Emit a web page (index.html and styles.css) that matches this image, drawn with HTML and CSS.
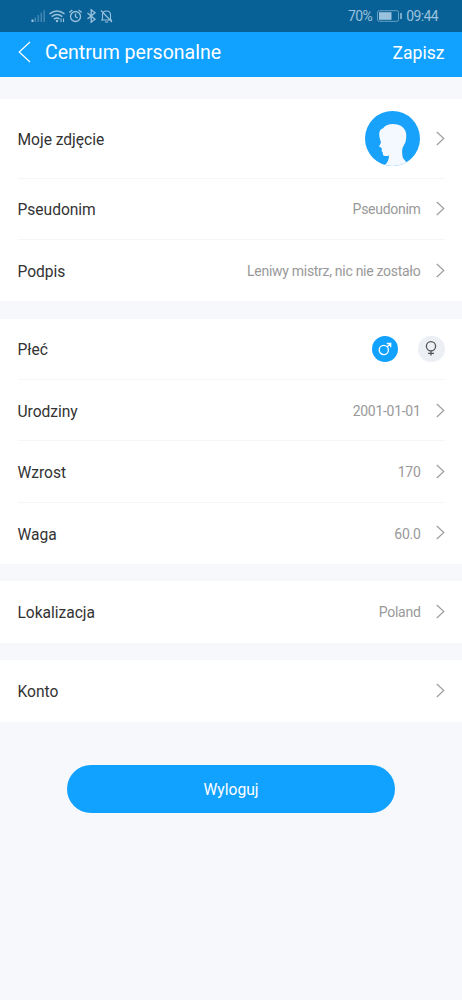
FILE: index.html
```html
<!DOCTYPE html>
<html lang="pl">
<head>
<meta charset="utf-8">
<title>Centrum personalne</title>
<link rel="stylesheet" href="styles.css">
</head>
<body>
<svg class="defs" width="0" height="0"><symbol id="chev" viewBox="0 0 9 15"><path d="M.8 1 7.8 7.5.8 14" fill="none" stroke="currentColor" stroke-width="1.1"/></symbol></svg>
<div class="status">
  <svg class="status-icons" width="84" height="16" viewBox="0 0 84 16" fill="none" stroke="currentColor" stroke-width="1.3">
    <path d="M2.500 11.500V14" stroke-width="2"/>
    <path d="M5.300 9.500V14M8.300 7V14M11.300 4.500V14M14.200 2.200V14" stroke-width="1.500" opacity=".4"/>
    <path d="M19.500 5.800Q27 .3 34.500 5.800M21.700 8.600Q27 4.600 32.300 8.600M24 11.200Q27 9 29.500 11" stroke-width="1.500"/>
    <circle cx="27" cy="13" r="1.200" fill="currentColor" stroke="none"/>
    <path d="M31 10.500v3.500M33.500 10.500v3.500" stroke-width="1.100"/>
    <circle cx="45.500" cy="8.500" r="5"/><path d="M45.500 5.500v3.200l2.200 1.300M39.300 4.500l3-2.500M51.700 4.500l-3-2.500"/>
    <path d="M57.500 5 65 11.200 61.200 14.200V1.800L65 4.800 57.500 11"/>
    <path d="M72.500 11.700V7q0-4 4-4 4 0 4 4v4.700M71 12h11M75 14h3.200M71 2.500 82 14" stroke-width="1.100"/>
  </svg>
  <div class="status-right"><span>70%</span>
    <svg width="25" height="12" viewBox="0 0 25 12"><rect x=".5" y=".7" width="21" height="10.600" rx="1.800" fill="none" stroke="currentColor" opacity=".65"/><rect x="2" y="2.200" width="12.500" height="7.600" fill="currentColor"/><path d="M24 3v6" stroke="currentColor" stroke-width="1.500"/></svg>
    <span>09:44</span></div>
</div>
<header class="bar">
  <svg width="13" height="22" viewBox="0 0 13 22"><path d="M12 1 1.200 11 12 21" fill="none" stroke="currentColor" stroke-width="1.200"/></svg>
  <h1>Centrum personalne</h1>
  <span class="save">Zapisz</span>
</header>
<main>
  <section class="group">
    <div class="row photo"><span class="label">Moje zdjęcie</span>
      <svg class="avatar" width="55" height="55" viewBox="0 0 55 55"><defs><clipPath id="round"><circle cx="27.500" cy="27.500" r="27.500"/></clipPath></defs><circle cx="27.500" cy="27.500" r="27.500" fill="#18a2fb"/><path clip-path="url(#round)" fill="#f3f9fe" d="M18 57 20 54Q24 50 24 44.500Q21 45.500 18.500 44.500 17.500 43.500 17.800 41.500L16.500 40 17 38.200 16 36.500 14 35.500 16 31.500Q13.500 25 14.500 21 15.500 17.500 18 17.500 20 13.500 27 13Q37 12.500 40.500 20 42 25 40.500 31L37.500 37Q36.500 42 38 47L43.500 54 45 57Z"/></svg>
      <svg class="chev"><use href="#chev"/></svg></div>
    <div class="row"><span class="label">Pseudonim</span><span class="value">Pseudonim</span><svg class="chev"><use href="#chev"/></svg></div>
    <div class="row"><span class="label">Podpis</span><span class="value">Leniwy mistrz, nic nie zostało</span><svg class="chev"><use href="#chev"/></svg></div>
  </section>
  <section class="group">
    <div class="row"><span class="label">Płeć</span>
      <span class="sex male"><svg width="14" height="14" viewBox="0 0 14 14" fill="none" stroke="currentColor" stroke-width="1.300"><circle cx="5.800" cy="8" r="4.600"/><path d="M9 5 12.500 1.700M8.800 1.500H12.700V5.200"/></svg></span>
      <span class="sex female"><svg width="12" height="15" viewBox="0 0 12 15" fill="none" stroke="currentColor" stroke-width="1.300"><circle cx="6" cy="5.300" r="4.600"/><path d="M6 9.800V14.500M3 12.300H9"/></svg></span></div>
    <div class="row"><span class="label">Urodziny</span><span class="value">2001-01-01</span><svg class="chev"><use href="#chev"/></svg></div>
    <div class="row"><span class="label">Wzrost</span><span class="value">170</span><svg class="chev"><use href="#chev"/></svg></div>
    <div class="row"><span class="label">Waga</span><span class="value">60.0</span><svg class="chev"><use href="#chev"/></svg></div>
  </section>
  <section class="group">
    <div class="row"><span class="label">Lokalizacja</span><span class="value">Poland</span><svg class="chev"><use href="#chev"/></svg></div>
  </section>
  <section class="group">
    <div class="row"><span class="label">Konto</span><svg class="chev"><use href="#chev"/></svg></div>
  </section>
  <button class="logout">Wyloguj</button>
</main>
</body>
</html>
```
FILE: styles.css
```css
* { box-sizing: border-box; }
body { margin: 0; min-height: 1000px; background: #f6f8fc; font-family: Roboto, "Liberation Sans", sans-serif; color: #333; }
svg { display: block; flex: none; }
.defs { position: absolute; }
.status { height: 32px; background: #086196; color: #9bc2dc; display: flex; align-items: center; justify-content: space-between; padding: 0 24px 0 30px; }
.status-right { display: flex; align-items: center; gap: 4.500px; font-size: 14px; letter-spacing: -.6px; }
.bar { height: 45px; background: #11a1ff; color: #fff; display: flex; align-items: center; padding: 0 17.500px; margin-bottom: 22px; }
.bar svg { margin-top: -5px; }
.bar h1 { font-size: 19.550px; font-weight: 400; margin: -3px auto 0 14.500px; line-height: 24px; }
.save { font-size: 17.600px; line-height: 24px; margin-top: -4px; }
.group { background: #fff; margin-bottom: 17.300px; padding: 0 17.500px; }
.row { height: 61.400px; display: flex; align-items: center; border-bottom: 1px solid #f6f6f7; }
.row:last-child { border-bottom-color: transparent; }
.photo { height: 79.500px; }
.label { font-size: 15.600px; line-height: 20px; margin: 3.300px auto 0 0; letter-spacing: -.03px; }
.value { font-size: 14px; line-height: 18px; color: #999; margin-top: 1.300px; letter-spacing: -.29px; }
.chev { width: 9px; height: 15px; margin-left: 15px; color: #999; }
.avatar + .chev { margin-left: 16px; }
.sex { width: 26.500px; height: 26.500px; border-radius: 50%; display: flex; align-items: center; justify-content: center; }
.male { background: #11a1ff; color: #fff; margin-right: 20px; }
.female { background: #eceff3; color: #555; }
.logout { display: block; width: 328px; height: 48px; margin: 43.500px auto 0; border: 0; padding: 2px 0 0; border-radius: 24px; background: #11a1ff; color: #fff; font: 15.600px Roboto, "Liberation Sans", sans-serif; }
```
